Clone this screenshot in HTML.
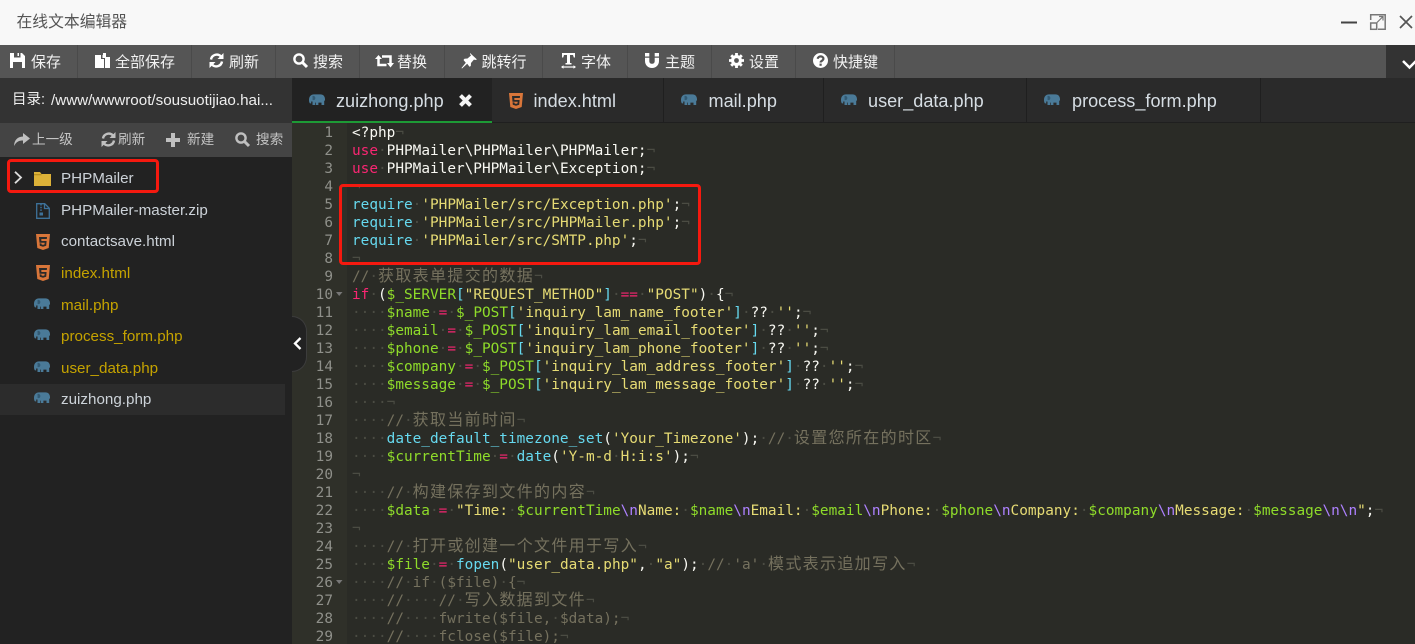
<!DOCTYPE html>
<html lang="zh"><head><meta charset="utf-8"><title>在线文本编辑器</title>
<style>
html,body{margin:0;padding:0;width:1415px;height:644px;overflow:hidden}
body{position:relative;background:#272822;font-family:"Liberation Sans","Noto Sans CJK SC",sans-serif}
.a,.a *{box-sizing:border-box}
.a{position:absolute;white-space:pre}
svg{position:absolute;overflow:visible}
#title{left:0;top:0;width:1415px;height:45px;background:#f8f8f8}
#tb{left:0;top:45px;width:1386px;height:33px;background:#555}
.d{position:absolute;top:45px;width:1px;height:33px;background:#4a4a4a}
.t{position:absolute;top:46px;height:33px;line-height:33px;font-size:15px;color:#f2f2f2}
.s{position:absolute;top:123px;height:33px;line-height:33px;font-size:13.6px;color:#c4c4c4}
.n{position:absolute;left:61px;height:31px;line-height:31px;font-size:15.2px;color:#ccd2d8}
.g{color:#c5a300}
.tab{position:absolute;top:79px;height:45px;line-height:45px;font-size:18.1px;color:#d6dde3}
.td{position:absolute;top:78px;width:1px;height:45px;background:#1f1f1f}
#code{left:352px;top:124px;font:14.4px/18px "DejaVu Sans Mono",monospace;color:#f8f8f2;white-space:normal;width:1063px}
#code div{height:18px;white-space:pre}
#nums{left:292px;top:124px;width:41px;text-align:right;font:14.4px/18px "DejaVu Sans Mono",monospace;color:#8f908a}
i{font-style:normal;color:#4b4c43}
b{font-weight:normal;font-family:"Noto Sans CJK SC",sans-serif;font-size:16px;letter-spacing:1.34px;line-height:0}
.k{color:#f92672}.c{color:#66d9ef}.q{color:#e6db74}.v{color:#8fdc2a}.m{color:#75715e}.e{color:#ae81ff}
</style></head><body>
<svg width="0" height="0" style="position:absolute"><defs>
<symbol id="el" viewBox="0 0 16 12"><path fill="#4a7a98" d="M0 6C0 2.500 2 .4 5 .4h6.500C14.300.4 16 2.500 16 5.200V7l-.8-.8V11h-2.700V8.600H9.400V11H6.700V8.600H6V11H3.500V7.500H2.200v2L.8 9.200C.3 8.500 0 7.500 0 6z"/><path fill="#335a73" d="M3.500 2c2-.4 3 1 2.800 2.500-.2 1.300-1.500 2-2.700 1.500z"/></symbol>
<symbol id="h5" viewBox="0 0 14 16"><path fill="#d9763a" d="M0 0h14l-1.300 14L7 16l-5.700-2z"/><path fill="#2a2a2a" d="M3 3h8l-.2 2H5.300l.1 2h5.200l-.4 4.700L7 12.800l-3.200-1.100-.2-2.300h1.800l.1 1 1.500.5 1.500-.5.200-1.700H3.500z"/></symbol>
</defs></svg>

<div class="a" id="title"></div>
<div class="a" style="left:16.500px;top:0;height:45px;line-height:45px;font-size:15.800px;color:#555">在线文本编辑器</div>
<svg style="left:1341px;top:14px" width="72" height="16"><path d="M0 8.500h16" stroke="#444" stroke-width="2"/><path d="M29.700 6V.8h14.500v14.500H37" fill="none" stroke="#777" stroke-width="1.500"/><rect x="29.700" y="9" width="6" height="6.300" fill="none" stroke="#777" stroke-width="1.500"/><path d="M36 8.500l6-6M38 2.500h4v4" fill="none" stroke="#777" stroke-width="1.200"/><path d="M59 2l12 12M71 2L59 14" stroke="#555" stroke-width="1.700"/></svg>

<div class="a" id="tb"></div>
<div class="a" style="left:1386px;top:45px;width:29px;height:33px;background:#333"></div>
<svg style="left:1402px;top:60px" width="13" height="10"><path d="M1 1l6.500 6.500L14 1" fill="none" stroke="#fff" stroke-width="2.500"/></svg>
<div class="d" style="left:77px"></div><div class="d" style="left:191px"></div><div class="d" style="left:275px"></div><div class="d" style="left:359px"></div><div class="d" style="left:444px"></div><div class="d" style="left:542px"></div><div class="d" style="left:627px"></div><div class="d" style="left:711px"></div><div class="d" style="left:795px"></div><div class="d" style="left:894px"></div>
<div class="t" style="left:31px">保存</div><div class="t" style="left:115px">全部保存</div><div class="t" style="left:229px">刷新</div><div class="t" style="left:313px">搜索</div><div class="t" style="left:397px">替换</div><div class="t" style="left:481.500px">跳转行</div><div class="t" style="left:581px">字体</div><div class="t" style="left:665px">主题</div><div class="t" style="left:749px">设置</div><div class="t" style="left:833px">快捷键</div>
<!-- toolbar icons -->
<svg style="left:10px;top:53px" width="16" height="15"><path fill="#fff" fill-rule="evenodd" d="M0 0h12l3 3v12H0zM4 0v4.500h6.500V0H9v3H7.500V0zM3 9v6h9V9z"/></svg>
<svg style="left:95px;top:53px" width="16" height="15"><path fill="#fff" d="M0 2h6v4h3v9H0z"/><path fill="#fff" d="M8 0h3v3H8zM11 .5V4h4v11h-5V5H7.500V2z"/></svg>
<svg style="left:209px;top:53px" width="15" height="15"><path fill="none" stroke="#fff" stroke-width="2.400" d="M2 6.500A5.800 5.800 0 0 1 12 3.500M13 8.500A5.800 5.800 0 0 1 3 11.500"/><path fill="#fff" d="M14.500 0v6h-6zM.5 15V9h6z"/></svg>
<svg style="left:293px;top:53px" width="15" height="15"><circle cx="6" cy="6" r="4.600" fill="none" stroke="#fff" stroke-width="2.400"/><path d="M9.500 9.500l4.500 4.500" stroke="#fff" stroke-width="3"/></svg>
<svg style="left:375px;top:54px" width="19" height="14"><path fill="none" stroke="#fff" stroke-width="2.500" d="M3.500 4v7h8M7 2.500h8.500v8"/><path fill="#fff" d="M0 5l3.500-4L7 5zM12 9l3.500 4.500L19 9z"/></svg>
<svg style="left:461px;top:53px" width="16" height="16"><path fill="#fff" d="M9 0l7 6.500-2 .5-1-.5-3 3.500-.2 3-1.300.8-2.300-3L1 15.500l-.5-.5 4.300-5.300L2.500 7l1-1.300 3-.2L10 2.500 9 1z"/></svg>
<svg style="left:561px;top:53px" width="15" height="16"><path fill="#fff" d="M1 0h13v4.500h-1.200L12 2H9v8h1.500v1.500h-6V10H6V2H3l-.8 2.500H1z"/><path fill="none" stroke="#fff" stroke-width="1.200" d="M1 14h13"/><path fill="#fff" d="M0 14l2.500-1.800v3.600zM15 14l-2.500-1.800v3.600z"/></svg>
<svg style="left:645px;top:53px" width="14" height="15"><path fill="#fff" d="M0 0h4.300v3.500H0zM9.700 0H14v3.500H9.700zM0 4.800h4.300V8c0 1.800 1 2.800 2.700 2.800S9.700 9.800 9.700 8V4.800H14V8c0 4-3 7-7 7s-7-3-7-7z"/></svg>
<svg style="left:729px;top:53px" width="15" height="15"><path stroke="#fff" stroke-width="2.800" d="M7.500 0v15M0 7.500h15M2.200 2.200l10.600 10.600M12.800 2.200L2.200 12.800"/><circle cx="7.500" cy="7.500" r="5.500" fill="#fff"/><circle cx="7.500" cy="7.500" r="2.400" fill="#555"/></svg>
<svg style="left:813px;top:53px" width="15" height="15"><circle cx="7.500" cy="7.500" r="7.500" fill="#fff"/><path fill="none" stroke="#555" stroke-width="2.200" d="M4.800 5.800c.2-3.200 5.600-3.200 5.600 0 0 2-2.800 2-2.800 3.700"/><path stroke="#555" stroke-width="2.200" d="M7.600 10.600v2.200"/></svg>

<!-- sidebar -->
<div class="a" style="left:0;top:78px;width:292px;height:45px;background:#333"></div>
<div class="a" style="left:0;top:123px;width:292px;height:34px;background:#444"></div>
<div class="a" style="left:0;top:157px;width:292px;height:487px;background:#222"></div>
<div class="a" style="left:12px;top:78px;height:45px;line-height:45px;font-size:14.500px;color:#eee">目录:</div>
<div class="a" style="left:51px;top:78px;height:45px;line-height:45px;font-size:15.200px;color:#eee">/www/wwwroot/sousuotijiao.hai...</div>
<div class="s" style="left:32px">上一级</div><div class="s" style="left:118px">刷新</div><div class="s" style="left:187px">新建</div><div class="s" style="left:256px">搜索</div>
<svg style="left:14px;top:133px" width="16" height="13"><path fill="#c0c0c0" d="M9 0l7 5.500L9 11V7.500C5 7.500 2.500 8.500 0 13 .3 7 3.500 3.700 9 3.500z"/></svg>
<svg style="left:101px;top:132px" width="15" height="15"><path fill="none" stroke="#c0c0c0" stroke-width="2.400" d="M2 6.500A5.800 5.800 0 0 1 12 3.500M13 8.500A5.800 5.800 0 0 1 3 11.500"/><path fill="#c0c0c0" d="M14.500 0v6h-6zM.5 15V9h6z"/></svg>
<svg style="left:166px;top:133px" width="14" height="14"><path fill="#c0c0c0" d="M5 0h4v5h5v4H9v5H5V9H0V5h5z"/></svg>
<svg style="left:235px;top:132px" width="15" height="15"><circle cx="6" cy="6" r="4.600" fill="none" stroke="#c0c0c0" stroke-width="2.400"/><path d="M9.500 9.500l4.500 4.500" stroke="#c0c0c0" stroke-width="3"/></svg>

<div class="a" style="left:0;top:384px;width:285px;height:31px;background:#2c2c2c"></div>
<svg style="left:14px;top:171px" width="9" height="13"><path d="M1 .8l6 5.700-6 5.700" fill="none" stroke="#ddd" stroke-width="1.800"/></svg>
<svg style="left:34px;top:171px" width="17" height="15"><path fill="#dcb138" d="M0 1h6l1.500 2H17v12H0z"/><path fill="#b89020" d="M0 3h7.500v1.300H0z"/></svg>
<svg style="left:36px;top:203px" width="14" height="16"><path fill="none" stroke="#3d7199" stroke-width="1.300" d="M.7.700h8l4.600 4.600v10H.700zM8.500.700v4.800h4.800"/><path stroke="#3d7199" stroke-width="1.500" stroke-dasharray="1.500 1.200" d="M5 1v7"/><rect x="3.500" y="9.500" width="3.500" height="3" fill="#3d7199"/></svg>
<svg style="left:36px;top:234px" width="14" height="16"><use href="#h5"/></svg>
<svg style="left:36px;top:265px" width="14" height="16"><use href="#h5"/></svg>
<svg style="left:34px;top:298px" width="16" height="12"><use href="#el"/></svg>
<svg style="left:34px;top:329px" width="16" height="12"><use href="#el"/></svg>
<svg style="left:34px;top:361px" width="16" height="12"><use href="#el"/></svg>
<svg style="left:34px;top:392px" width="16" height="12"><use href="#el"/></svg>
<div class="n" style="top:163px">PHPMailer</div>
<div class="n" style="top:195px">PHPMailer-master.zip</div>
<div class="n" style="top:226px">contactsave.html</div>
<div class="n g" style="top:258px">index.html</div>
<div class="n g" style="top:290px">mail.php</div>
<div class="n g" style="top:321px">process_form.php</div>
<div class="n g" style="top:353px">user_data.php</div>
<div class="n" style="top:384px">zuizhong.php</div>

<!-- tabs -->
<div class="a" style="left:292px;top:78px;width:1123px;height:45px;background:#2a2a2a"></div>
<div class="a" style="left:292px;top:78px;width:200px;height:45px;background:#222;border-bottom:2px solid #1d9a35"></div>
<div class="a" style="left:492px;top:122px;width:923px;height:1px;background:#1f1f1f"></div>
<div class="td" style="left:663px"></div><div class="td" style="left:823px"></div><div class="td" style="left:1026px"></div><div class="td" style="left:1260px"></div>
<svg style="left:309px;top:94px" width="16" height="12"><use href="#el"/></svg>
<svg style="left:509px;top:93px" width="14" height="16"><use href="#h5"/></svg>
<svg style="left:681px;top:94px" width="16" height="12"><use href="#el"/></svg>
<svg style="left:841px;top:94px" width="16" height="12"><use href="#el"/></svg>
<svg style="left:1044px;top:94px" width="16" height="12"><use href="#el"/></svg>
<div class="tab" style="left:336px">zuizhong.php</div>
<svg style="left:458px;top:93px" width="15" height="15"><path d="M2.500 2.500l10 10M12.500 2.500l-10 10" stroke="#f4f4f4" stroke-width="4"/></svg>
<div class="tab" style="left:533.500px">index.html</div>
<div class="tab" style="left:708.500px">mail.php</div>
<div class="tab" style="left:868px">user_data.php</div>
<div class="tab" style="left:1072px">process_form.php</div>

<!-- editor -->
<div class="a" style="left:292px;top:123px;width:1123px;height:521px;background:#2a2b26"></div>
<div class="a" style="left:292px;top:123px;width:55px;height:521px;background:#2f3029"></div>
<div class="a" id="nums">1
2
3
4
5
6
7
8
9
10
11
12
13
14
15
16
17
18
19
20
21
22
23
24
25
26
27
28
29</div>
<svg style="left:336px;top:292px" width="7" height="5"><path d="M0 0h6.500L3.200 4z" fill="#777"/></svg>
<svg style="left:336px;top:580px" width="7" height="5"><path d="M0 0h6.500L3.200 4z" fill="#777"/></svg>
<div class="a" id="code"><div>&lt;?php<i>¬</i></div><div><span class="k">use</span><i>·</i>PHPMailer\PHPMailer\PHPMailer;<i>¬</i></div><div><span class="k">use</span><i>·</i>PHPMailer\PHPMailer\Exception;<i>¬</i></div><div><i>¬</i></div><div><span class="c">require</span><i>·</i><span class="q">'PHPMailer/src/Exception.php'</span>;<i>¬</i></div><div><span class="c">require</span><i>·</i><span class="q">'PHPMailer/src/PHPMailer.php'</span>;<i>¬</i></div><div><span class="c">require</span><i>·</i><span class="q">'PHPMailer/src/SMTP.php'</span>;<i>¬</i></div><div><i>¬</i></div><div><span class="m">//<i>·</i><b>获取表单提交的数据</b></span><i>¬</i></div><div><span class="k">if</span><i>·</i>(<span class="v">$_SERVER</span><span class="c">[</span><span class="q">"REQUEST_METHOD"</span><span class="c">]</span><i>·</i><span class="k">==</span><i>·</i><span class="q">"POST"</span>)<i>·</i>{<i>¬</i></div><div><i>····</i><span class="v">$name</span><i>·</i><span class="k">=</span><i>·</i><span class="v">$_POST</span><span class="c">[</span><span class="q">'inquiry_lam_name_footer'</span><span class="c">]</span><i>·</i>??<i>·</i><span class="q">''</span>;<i>¬</i></div><div><i>····</i><span class="v">$email</span><i>·</i><span class="k">=</span><i>·</i><span class="v">$_POST</span><span class="c">[</span><span class="q">'inquiry_lam_email_footer'</span><span class="c">]</span><i>·</i>??<i>·</i><span class="q">''</span>;<i>¬</i></div><div><i>····</i><span class="v">$phone</span><i>·</i><span class="k">=</span><i>·</i><span class="v">$_POST</span><span class="c">[</span><span class="q">'inquiry_lam_phone_footer'</span><span class="c">]</span><i>·</i>??<i>·</i><span class="q">''</span>;<i>¬</i></div><div><i>····</i><span class="v">$company</span><i>·</i><span class="k">=</span><i>·</i><span class="v">$_POST</span><span class="c">[</span><span class="q">'inquiry_lam_address_footer'</span><span class="c">]</span><i>·</i>??<i>·</i><span class="q">''</span>;<i>¬</i></div><div><i>····</i><span class="v">$message</span><i>·</i><span class="k">=</span><i>·</i><span class="v">$_POST</span><span class="c">[</span><span class="q">'inquiry_lam_message_footer'</span><span class="c">]</span><i>·</i>??<i>·</i><span class="q">''</span>;<i>¬</i></div><div><i>····¬</i></div><div><i>····</i><span class="m">//<i>·</i><b>获取当前时间</b></span><i>¬</i></div><div><i>····</i><span class="c">date_default_timezone_set</span>(<span class="q">'Your_Timezone'</span>);<i>·</i><span class="m">//<i>·</i><b>设置您所在的时区</b></span><i>¬</i></div><div><i>····</i><span class="v">$currentTime</span><i>·</i><span class="k">=</span><i>·</i><span class="c">date</span>(<span class="q">'Y-m-d<i>·</i>H:i:s'</span>);<i>¬</i></div><div><i>¬</i></div><div><i>····</i><span class="m">//<i>·</i><b>构建保存到文件的内容</b></span><i>¬</i></div><div><i>····</i><span class="v">$data</span><i>·</i><span class="k">=</span><i>·</i><span class="q">"Time:<i>·</i><span class="v">$currentTime</span><span class="e">\n</span>Name:<i>·</i><span class="v">$name</span><span class="e">\n</span>Email:<i>·</i><span class="v">$email</span><span class="e">\n</span>Phone:<i>·</i><span class="v">$phone</span><span class="e">\n</span>Company:<i>·</i><span class="v">$company</span><span class="e">\n</span>Message:<i>·</i><span class="v">$message</span><span class="e">\n\n</span>"</span>;<i>¬</i></div><div><i>¬</i></div><div><i>····</i><span class="m">//<i>·</i><b>打开或创建一个文件用于写入</b></span><i>¬</i></div><div><i>····</i><span class="v">$file</span><i>·</i><span class="k">=</span><i>·</i><span class="c">fopen</span>(<span class="q">"user_data.php"</span>,<i>·</i><span class="q">"a"</span>);<i>·</i><span class="m">//<i>·</i>'a'<i>·</i><b>模式表示追加写入</b></span><i>¬</i></div><div><i>····</i><span class="m">//<i>·</i>if<i>·</i>($file)<i>·</i>{</span><i>¬</i></div><div><i>····</i><span class="m">//<i>····</i>//<i>·</i><b>写入数据到文件</b></span><i>¬</i></div><div><i>····</i><span class="m">//<i>····</i>fwrite($file,<i>·</i>$data);</span><i>¬</i></div><div><i>····</i><span class="m">//<i>····</i>fclose($file);</span><i>¬</i></div></div>

<!-- collapse handle -->
<div class="a" style="left:277px;top:316px;width:30px;height:56px;background:#222;border:1px solid #3c3c3c;border-left:0;border-radius:0 15px 15px 0"></div>
<div class="a" style="left:277px;top:316px;width:15px;height:56px;background:#222"></div>
<svg style="left:293px;top:337px" width="9" height="13"><path d="M7.500 1L2 6.500 7.500 12" fill="none" stroke="#fff" stroke-width="2.300"/></svg>

<!-- red annotation boxes -->
<div class="a" style="left:7px;top:159px;width:152px;height:34px;border:3px solid #f5190f;border-radius:4px"></div>
<div class="a" style="left:339px;top:184px;width:362px;height:81px;border:3px solid #f5190f;border-radius:4px"></div>
</body></html>
